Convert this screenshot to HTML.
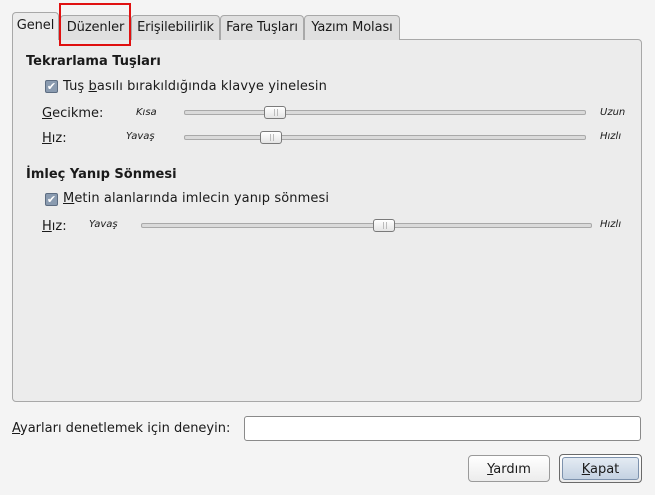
<!DOCTYPE html>
<html><head><meta charset="utf-8"><style>
*{margin:0;padding:0;box-sizing:border-box}
body{width:655px;height:495px;background:#f4f4f4;font-family:"DejaVu Sans","Liberation Sans",sans-serif;font-size:13px;color:#1a1a1a;position:relative;overflow:hidden}
.a{position:absolute;white-space:nowrap}
.panel{position:absolute;left:12px;top:39px;width:630px;height:363px;background:#ececec;border:1px solid #a8a8a8;border-radius:0 4px 4px 4px}
.tab{position:absolute;top:15px;height:25px;background:#e0e0e0;border:1px solid #a8a8a8;border-bottom:none;border-radius:4px 4px 0 0;padding-top:4px;text-align:center;font-size:13px;letter-spacing:-0.1px}
.tab.act{top:12px;height:28px;background:#ececec;padding-top:5px;z-index:2}
.b{font-weight:bold}
.track{position:absolute;height:5px;background:#dadada;border:1px solid #a9a9a9;border-radius:2px}
.thumb{position:absolute;width:22px;height:13px;background:linear-gradient(#fff,#e4e4e4);border:1px solid #7a7a7a;border-radius:3px}
.thumb:before{content:"";position:absolute;left:9px;top:2px;width:2px;height:7px;border-left:1px solid #bbb;border-right:1px solid #bbb}
.sm{font-size:10px;font-style:italic}
.cb{position:absolute;width:13px;height:13px;background:#8a9bb0;border:1px solid #5d6d82;border-radius:2px;color:#fff;font-size:11px;line-height:11px;text-align:center}
.btn{position:absolute;height:27px;border:1px solid #9a9a9a;border-radius:4px;background:linear-gradient(#fff,#ececec);text-align:center;padding-top:6px}
u{text-decoration:underline}
</style></head><body>
<div class="panel"></div>
<div class="tab act" style="left:12px;width:47px">Genel</div>
<div class="tab" style="left:60px;width:71px">Düzenler</div>
<div class="tab" style="left:131px;width:89px">Erişilebilirlik</div>
<div class="tab" style="left:220px;width:84px">Fare Tuşları</div>
<div class="tab" style="left:304px;width:96px">Yazım Molası</div>
<div class="a" style="left:59px;top:3px;width:72px;height:43px;border:2px solid #e01010;z-index:5"></div>

<div class="a b" style="left:26px;top:54px">Tekrarlama Tuşları</div>
<div class="cb" style="left:45px;top:80px">✔</div>
<div class="a" style="left:63px;top:79px;letter-spacing:0.1px">Tuş <u>b</u>asılı bırakıldığında klavye yinelesin</div>
<div class="a" style="left:42px;top:106px"><u>G</u>ecikme:</div>
<div class="a sm" style="left:136px;top:107px">Kısa</div>
<div class="track" style="left:184px;top:110px;width:402px"></div>
<div class="thumb" style="left:264px;top:106px"></div>
<div class="a sm" style="left:600px;top:107px">Uzun</div>
<div class="a" style="left:42px;top:131px"><u>H</u>ız:</div>
<div class="a sm" style="left:126px;top:131px">Yavaş</div>
<div class="track" style="left:184px;top:135px;width:402px"></div>
<div class="thumb" style="left:260px;top:131px"></div>
<div class="a sm" style="left:600px;top:131px">Hızlı</div>

<div class="a b" style="left:26px;top:167px">İmleç Yanıp Sönmesi</div>
<div class="cb" style="left:45px;top:193px">✔</div>
<div class="a" style="left:63px;top:191px;letter-spacing:0.1px"><u>M</u>etin alanlarında imlecin yanıp sönmesi</div>
<div class="a" style="left:42px;top:219px"><u>H</u>ız:</div>
<div class="a sm" style="left:89px;top:219px">Yavaş</div>
<div class="track" style="left:141px;top:223px;width:451px"></div>
<div class="thumb" style="left:373px;top:219px"></div>
<div class="a sm" style="left:600px;top:219px">Hızlı</div>

<div class="a" style="left:12px;top:421px"><u>A</u>yarları denetlemek için deneyin:</div>
<div class="a" style="left:244px;top:416px;width:397px;height:25px;background:#fff;border:1px solid #8a8a8a;border-radius:3px"></div>
<div class="btn" style="left:468px;top:455px;width:82px"><u>Y</u>ardım</div>
<div class="btn" style="left:559px;top:454px;width:83px;height:29px;border-color:#6a6a6a;padding:2px"><div style="height:23px;border:1px solid #7d92ad;border-radius:3px;background:linear-gradient(#e4ebf3,#c4d2e2);padding-top:4px"><u>K</u>apat</div></div>
</body></html>
